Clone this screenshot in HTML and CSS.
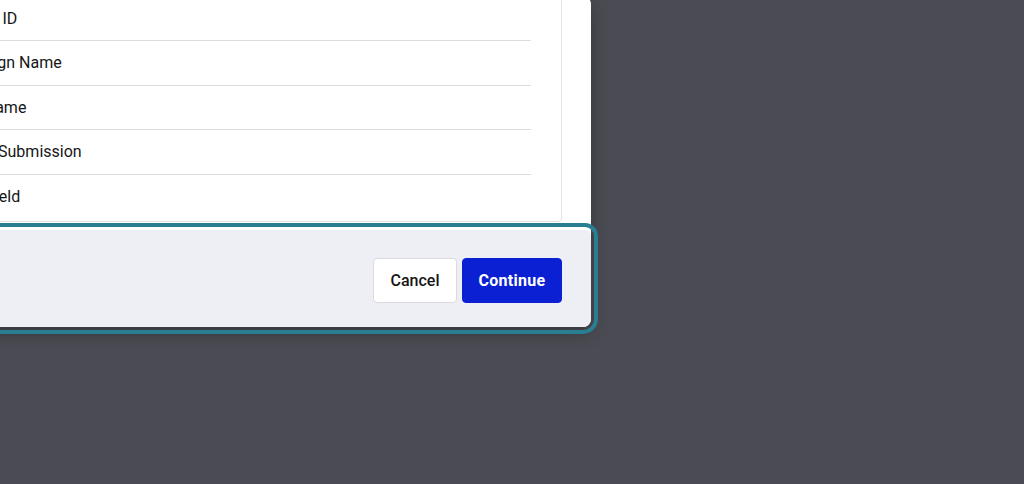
FILE: index.html
```html
<!DOCTYPE html>
<html lang="en">
<head>
<meta charset="utf-8">
<title>Select fields</title>
<link rel="stylesheet" href="styles.css">
</head>
<body>
  <div class="modal" role="dialog" aria-modal="true">
    <div class="modal-body">
      <ul class="field-list">
        <li class="field-row"><span class="field-label">Contact ID</span></li>
        <li class="field-row"><span class="field-label">Campaign Name</span></li>
        <li class="field-row"><span class="field-label">Form Name</span></li>
        <li class="field-row"><span class="field-label">Date of Submission</span></li>
        <li class="field-row"><span class="field-label">Email Field</span></li>
      </ul>
    </div>
    <div class="modal-footer">
      <button class="btn btn-secondary" type="button">Cancel</button>
      <button class="btn btn-primary" type="button">Continue</button>
    </div>
  </div>
</body>
</html>
```

FILE: styles.css
```css
* {
  box-sizing: border-box;
}

html, body {
  margin: 0;
  padding: 0;
  height: 100%;
}

body {
  background: #4b4c53;
  font-family: Roboto, "Liberation Sans", sans-serif;
  color: #161616;
  overflow: hidden;
}

.modal {
  width: 689.5px;
  margin-left: -98.5px;
  margin-top: -4.5px;
  background: #ffffff;
  border-radius: 8px;
  box-shadow: 0 6px 18px rgba(0, 0, 0, 0.28);
}

.modal-body {
  padding: 0 29px 8px 24px;
}

.field-list {
  list-style: none;
  margin: 0;
  padding: 0 30px 2px 16px;
  border: 1px solid #e2e3e6;
  border-radius: 4px;
}

.field-row {
  height: 44.5px;
  display: flex;
  align-items: center;
  border-bottom: 1px solid #dcdcdf;
  font-size: 16px;
  line-height: 24px;
  padding-top: 1px;
}

.field-row:last-child {
  border-bottom: none;
}

.field-label {
  white-space: nowrap;
}

.modal-footer {
  display: flex;
  justify-content: flex-end;
  gap: 5px;
  height: 97px;
  padding: 28px 29px 24px;
  background: #edeff5;
  border-radius: 6px 6px 8px 8px;
  outline: 4px solid #297e91;
  outline-offset: 3px;
}

.btn {
  height: 45px;
  border-radius: 4px;
  font-family: Roboto, "Liberation Sans", sans-serif;
  font-size: 16px;
  line-height: 20px;
  cursor: pointer;
}

.btn-secondary {
  width: 84px;
  padding: 0;
  background: #ffffff;
  color: #161616;
  border: 1px solid #dadbe0;
  font-weight: 500;
}

.btn-primary {
  width: 100px;
  padding: 0;
  background: #0b1fd3;
  color: #ffffff;
  border: 1px solid #0b1fd3;
  font-weight: 700;
  letter-spacing: 0.3px;
}
```
